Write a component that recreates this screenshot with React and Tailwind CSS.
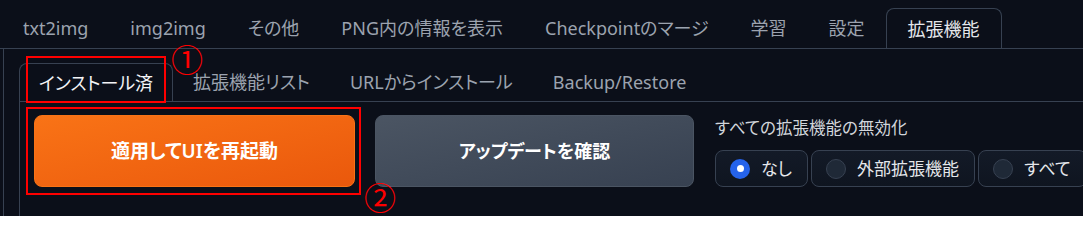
import React from 'react';

const topTabs = ['txt2img', 'img2img', 'その他', 'PNG内の情報を表示', 'Checkpointのマージ', '学習', '設定', '拡張機能'];
const subTabs = ['インストール済', '拡張機能リスト', 'URLからインストール', 'Backup/Restore'];
const options = ['なし', '外部拡張機能', 'すべて'];

export default function App() {
  const activeTop = '拡張機能';
  const activeSub = 'インストール済';
  const selected = 'なし';

  return (
    <div className="relative w-[1083px] h-[216px] overflow-hidden bg-[#0b0f19] font-['Noto_Sans','Noto_Sans_CJK_JP',sans-serif] [font-feature-settings:'palt']">
      {/* Top tabs */}
      <div className="flex pt-2 pl-[2px] border-b border-[#374151]">
        {topTabs.map((t) => (
          <button
            key={t}
            className={
              t === activeTop
                ? 'h-10 px-[21px] -mb-px flex items-center text-[18px] leading-none text-[#e5e7eb] bg-[#0b0f19] border border-b-0 border-[#374151] rounded-t-lg'
                : 'h-10 px-[21px] flex items-center text-[18px] leading-none text-[#9ca3af]'
            }
          >
            {t}
          </button>
        ))}
      </div>

      {/* Tab panel */}
      <div className="ml-[3px] w-[1200px] h-[200px] border-l border-[#374151] pl-[15px] pt-[14px]">
        {/* Sub tabs */}
        <div className="flex border-b border-[#374151]">
          {subTabs.map((t) => (
            <button
              key={t}
              className={
                t === activeSub
                  ? 'h-[38px] px-[19px] -mb-px flex items-center text-[18px] leading-none text-[#f3f4f6] bg-[#0b0f19] border border-b-0 border-[#374151] rounded-t-lg'
                  : 'h-[38px] px-[20px] flex items-center text-[18px] leading-none text-[#9ca3af]'
              }
            >
              {t}
            </button>
          ))}
        </div>

        {/* Sub panel */}
        <div className="h-[120px] border-l border-[#374151] pl-[14px] pt-[13px] flex items-start">
          <button className="w-[321px] h-[72px] rounded-lg bg-gradient-to-br from-[#f97316] to-[#ea580c] border border-[#f97316] text-white text-[19px] font-semibold flex items-center justify-center">
            適用してUIを再起動
          </button>
          <button className="ml-5 w-[319px] h-[72px] rounded-lg bg-gradient-to-br from-[#4b5563] to-[#374151] border border-[#4b5563] text-white text-[18px] font-semibold flex items-center justify-center">
            アップデートを確認
          </button>

          <div className="ml-[21px] flex flex-col">
            <span className="text-[16.5px] leading-6 text-[#d1d5db] pt-[1px]">すべての拡張機能の無効化</span>
            <div className="mt-[10px] flex gap-[3px]">
              {options.map((o) => (
                <label
                  key={o}
                  className="h-[37px] pl-[14px] pr-[15px] flex items-center gap-[11px] rounded-lg border border-[#374151] bg-gradient-to-b from-[#131a27] to-[#0f1520] text-[17px] leading-none text-[#e5e7eb]"
                >
                  {o === selected ? (
                    <span className="w-5 h-5 rounded-full bg-[#2563eb] flex items-center justify-center">
                      <span className="w-[7px] h-[7px] rounded-full bg-white" />
                    </span>
                  ) : (
                    <span className="w-5 h-5 rounded-full bg-[#1f2937] border border-[#374151]" />
                  )}
                  {o}
                </label>
              ))}
            </div>
          </div>
        </div>
      </div>

      {/* Annotations */}
      <div className="absolute left-[26px] top-[56px] w-[140px] h-[47px] border-2 border-[#ff0000]" />
      <span className="absolute left-[171px] top-[42px] font-['Noto_Sans_CJK_JP',sans-serif] text-[32px] leading-[32px] text-[#ff0000]">①</span>
      <div className="absolute left-[26px] top-[107px] w-[335px] h-[88px] border-2 border-[#ff0000]" />
      <span className="absolute left-[364px] top-[180px] font-['Noto_Sans_CJK_JP',sans-serif] text-[32px] leading-[32px] text-[#ff0000]">②</span>
    </div>
  );
}
